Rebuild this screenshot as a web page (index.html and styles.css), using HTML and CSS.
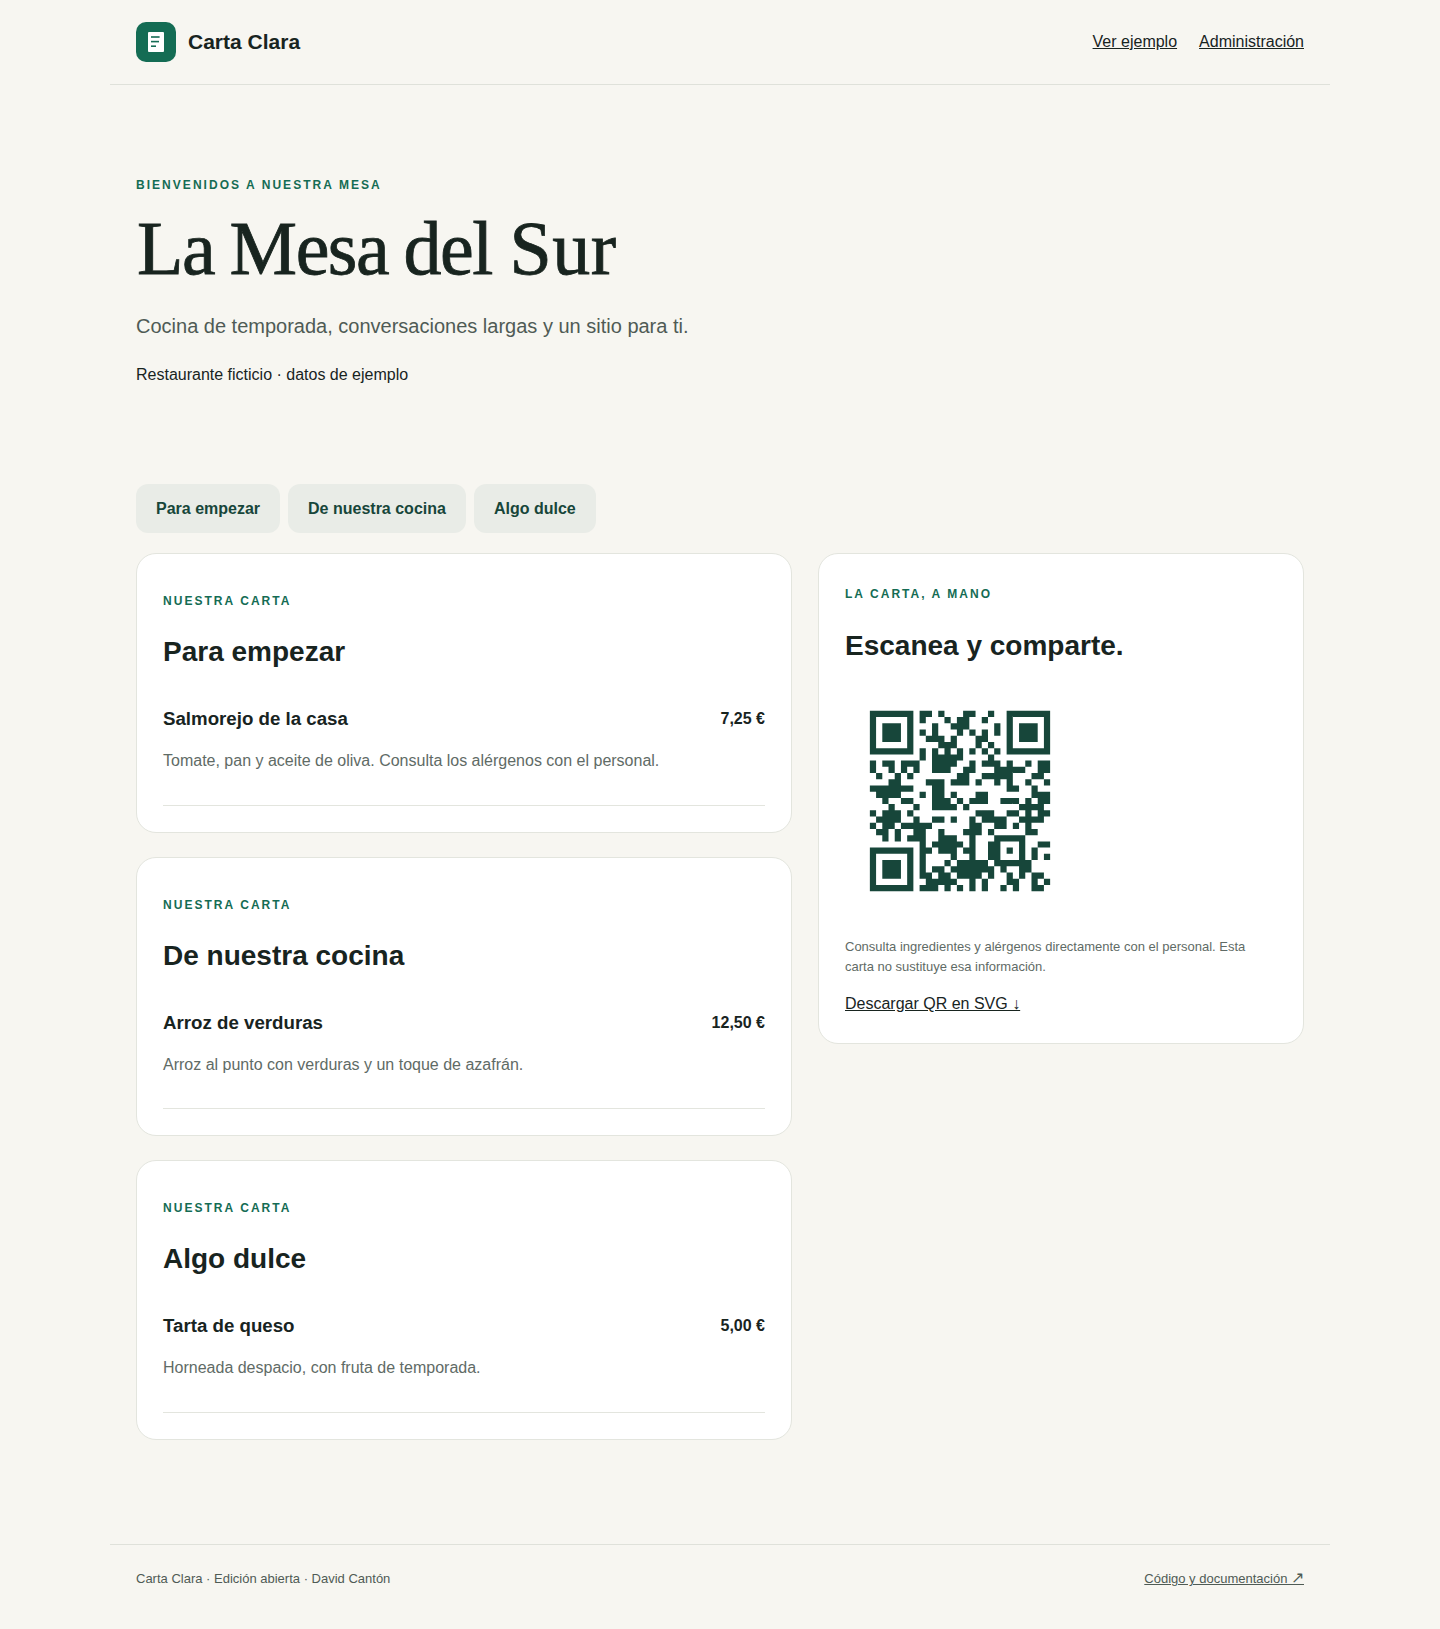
FILE: index.html
```html
<!DOCTYPE html>
<html lang="es">
<head>
<meta charset="utf-8">
<title>La Mesa del Sur · Carta Clara</title>
<link rel="stylesheet" href="styles.css">
</head>
<body>
<div class="page">
  <header class="topbar">
    <a class="brand" href="#">
      <span class="brand-mark">
        <svg viewBox="0 0 40 40" width="40" height="40" aria-hidden="true">
          <rect x="12" y="10" width="16" height="20" rx="1" fill="#fff"/>
          <rect x="15" y="14.2" width="8.6" height="1.6" fill="#146c54"/>
          <rect x="15" y="18.8" width="8" height="1.6" fill="#146c54"/>
          <rect x="15" y="23.4" width="5" height="1.6" fill="#146c54"/>
        </svg>
      </span>
      <span class="brand-name">Carta Clara</span>
    </a>
    <nav class="topnav">
      <a href="#">Ver ejemplo</a>
      <a href="#">Administración</a>
    </nav>
  </header>

  <section class="hero">
    <p class="eyebrow">Bienvenidos a nuestra mesa</p>
    <h1>La Mesa del <span class="h1-last">Sur</span></h1>
    <p class="lead">Cocina de temporada, conversaciones largas y un sitio para ti.</p>
    <p class="note">Restaurante ficticio · datos de ejemplo</p>
  </section>

  <nav class="tabs">
    <a href="#" class="tab">Para empezar</a>
    <a href="#" class="tab">De nuestra cocina</a>
    <a href="#" class="tab">Algo dulce</a>
  </nav>

  <main class="layout">
    <div class="menu">
      <section class="card">
        <p class="eyebrow">Nuestra carta</p>
        <h2>Para empezar</h2>
        <article class="dish">
          <div class="dish-head"><h3>Salmorejo de la casa</h3><span class="price">7,25 €</span></div>
          <p>Tomate, pan y aceite de oliva. Consulta los alérgenos con el personal.</p>
        </article>
      </section>
      <section class="card">
        <p class="eyebrow">Nuestra carta</p>
        <h2>De nuestra cocina</h2>
        <article class="dish">
          <div class="dish-head"><h3>Arroz de verduras</h3><span class="price">12,50 €</span></div>
          <p>Arroz al punto con verduras y un toque de azafrán.</p>
        </article>
      </section>
      <section class="card">
        <p class="eyebrow">Nuestra carta</p>
        <h2>Algo dulce</h2>
        <article class="dish">
          <div class="dish-head"><h3>Tarta de queso</h3><span class="price">5,00 €</span></div>
          <p>Horneada despacio, con fruta de temporada.</p>
        </article>
      </section>
    </div>

    <aside class="card share">
      <p class="eyebrow">La carta, a mano</p>
      <h2>Escanea y comparte.</h2>
      <div class="qr" id="qr"></div>
      <p class="fineprint">Consulta ingredientes y alérgenos directamente con el personal. Esta carta no sustituye esa información.</p>
      <a class="download" href="#">Descargar QR en SVG ↓</a>
    </aside>
  </main>

  <footer class="footer">
    <span>Carta Clara · Edición abierta · David Cantón</span>
    <a href="#">Código y documentación <span class="arrow">↗</span></a>
  </footer>
</div>
<script src="qr.js"></script>
</body>
</html>
```
FILE: styles.css
```css
* { box-sizing: border-box; }
html, body { margin: 0; padding: 0; }
body {
  background: #f7f6f1;
  color: #18241f;
  font-family: "Liberation Sans", Arial, sans-serif;
  font-size: 16px;
  line-height: 1.5;
}
.page { width: 1220px; margin: 0 auto; }
a { color: inherit; }
p, h1, h2, h3 { margin: 0; }

.topbar {
  display: flex;
  justify-content: space-between;
  align-items: center;
  height: 85px;
  padding: 0 26px;
  border-bottom: 1px solid #dfe1da;
}
.brand { display: flex; align-items: center; gap: 12px; text-decoration: none; }
.brand-mark { display: block; width: 40px; height: 40px; border-radius: 10px; background: #146c54; }
.brand-mark svg { display: block; }
.brand-name { font-size: 21px; font-weight: 700; color: #18241f; }
.topnav { display: flex; gap: 22px; color: #18241f; }

.hero { padding: 91px 26px 0; height: 399px; }
.eyebrow {
  color: #146c54;
  font-size: 12px;
  font-weight: 700;
  letter-spacing: .17em;
  line-height: 18px;
  text-transform: uppercase;
}
h1 {
  margin: 12px 0 0 1px;
  color: #18241f;
  font-family: "Liberation Serif", "Times New Roman", serif;
  font-size: 76px;
  font-weight: 400;
  letter-spacing: -.02em;
  word-spacing: -2px;
  line-height: 84px;
  -webkit-text-stroke: .8px #18241f;
}
.h1-last { margin-left: 2px; letter-spacing: .5px; }
.lead { margin-top: 21px; color: #4f5b55; font-size: 20px; line-height: 30px; }
.note { margin-top: 22px; color: #18241f; line-height: 24px; }

.tabs { display: flex; gap: 8px; padding: 0 26px; }
.tab {
  height: 49px;
  padding: 0 20px;
  border-radius: 12px;
  background: #e9ece7;
  color: #17463a;
  font-weight: 700;
  line-height: 49px;
  text-decoration: none;
}

.layout {
  display: grid;
  grid-template-columns: 656px 486px;
  gap: 26px;
  align-items: start;
  margin-top: 20px;
  padding: 0 26px;
}
.menu { display: flex; flex-direction: column; gap: 24px; }
.card {
  background: #fff;
  border: 1px solid #e3e5de;
  border-radius: 20px;
  padding: 38px 26px 26px;
}
h2 {
  margin-top: 24px;
  color: #18241f;
  font-size: 28px;
  font-weight: 700;
  line-height: 36px;
}
.dish { margin-top: 36px; padding-bottom: 31.5px; border-bottom: 1px solid #e3e5de; }
.dish-head { display: flex; justify-content: space-between; align-items: center; gap: 16px; }
h3 { font-size: 18.7px; font-weight: 700; line-height: 26px; }
.price { font-weight: 700; color: #18241f; }
.dish p { margin-top: 17px; color: #5f6b66; line-height: 24px; }

.share { padding: 31px 26px 27px; }
.share h2 { margin-top: 25px; }
.qr { width: 230px; height: 230px; margin-top: 22px; }
.qr svg { display: block; width: 230px; height: 230px; }
.fineprint { margin-top: 21px; color: #5f6b66; font-size: 13px; line-height: 20px; }
.download { display: inline-block; margin-top: 15px; color: #18241f; line-height: 24px; }

.footer {
  display: flex;
  justify-content: space-between;
  align-items: center;
  height: 85px;
  margin-top: 104.5px;
  padding: 0 26px 16px;
  border-top: 1px solid #dfe1da;
  color: #4f5b55;
  font-size: 13px;
}
.arrow { font-size: 15.5px; line-height: 1; }
```
FILE: qr.js
```js
var rows = [
"1111111 0 1101000110010 0 1111111",
"1000001 0 1000101100100 0 1000001",
"1011101 0 0010011100001 0 1011101",
"1011101 0 1010001010101 0 1011101",
"1011101 0 0111010001100 0 1011101",
"1000001 0 0001110001010 0 1000001",
"1111111 0 1010101010101 0 1111111",
"0000000 0 1011111000010 0 0000000",
"10110111 00 1111 00 1 0 111 0 1 00 1 0 11",
"10010101 00 111 00 11 000 11111 00 11",
"01001010 000000 11 00 11111 000 11 0",
"00011000 0 111 0 111 0 1 00 1 0 1 00 1 00 1",
"11111110 00 11 0000000000 11 00 1 00",
"01111000 1 0 11 0 1 000 11 0000000 111",
"00100110 00 111 0 1 0 111 00 111 0 1 0 11",
"00010001 00 1111 0 1 00000000 1111 0",
"10111010 000000000 111 00 11 0 1 0 11 0",
"01111001 00 11 0 1 00 1 0 1111 00 1111 0",
"10110111 11 000000 11 00 11 0 1 0 1 000",
"01101001 1 00 1 000 111 0 1 00000 11 00",
"00101011 100111001000111110000",
"00000000 101111101001100010011",
"11111110 110111011001101010100",
"10000010 100001001001100010101",
"10111010 100010111110111111000",
"10111010 101101111111010011000",
"10111010 110110111101001010110",
"10000010 011111001010001100101",
"11111110 111010101010010100110"
];
var d = "";
rows.forEach(function (row, y) {
  var s = row.replace(/ /g, "");
  for (var x = 0; x < s.length; x++) {
    if (s[x] === "1") d += "M" + (x + 4) + " " + (y + 4) + "h1v1h-1z";
  }
});
document.getElementById("qr").innerHTML =
  '<svg viewBox="0 0 37 37" aria-label="Código QR"><path fill="#17463a" d="' + d + '"/></svg>';
```
